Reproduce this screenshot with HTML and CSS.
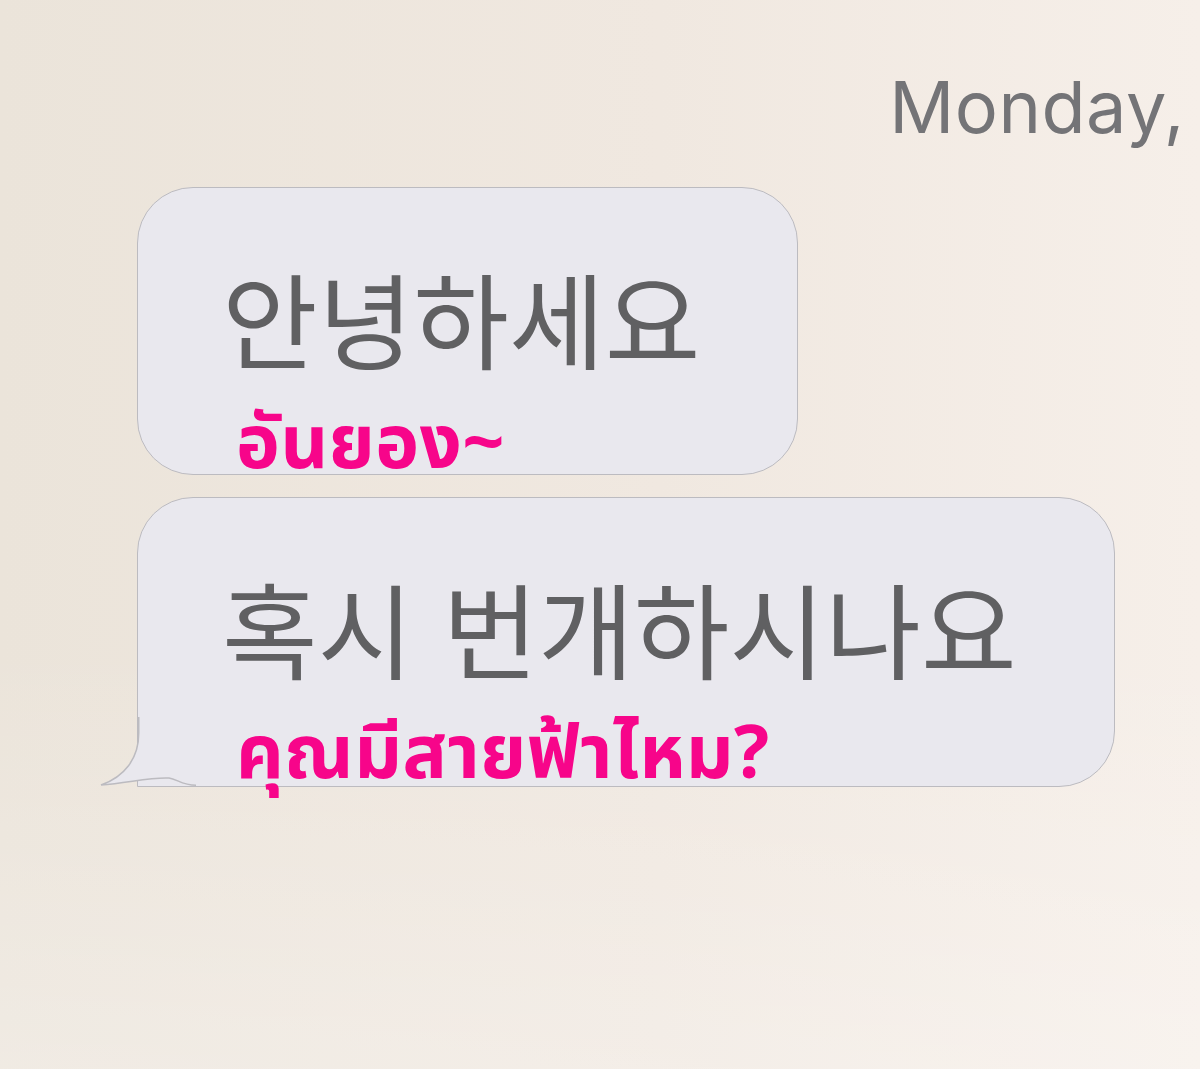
FILE: index.html
```html
<!DOCTYPE html>
<html lang="ko">
<head>
    <meta charset="UTF-8">
    <meta name="viewport" content="width=device-width, initial-scale=1.0">
    <title>Messages</title>
    <link rel="stylesheet" href="styles.css">
</head>
<body>
    <div class="screen">
        <div class="date">Monday,</div>
        <div class="thread">
            <div class="bubble">
                <div class="ko">안녕하세요</div>
                <div class="th">อันยอง~</div>
            </div>
            <div class="bubble last">
                <div class="ko">혹시 번개하시나요</div>
                <div class="th">คุณมีสายฟ้าไหม?</div>
                <svg class="tail" width="98" height="72" viewBox="0 0 98 72">
                    <path class="tail-fill" d="M40.75 0 L40.75 16 C40.75 42 26 60 3 68 C30 66 52 60 71 61 C79 62 84 68.25 98 68.25 L98 0 Z"/>
                    <path class="tail-line" d="M40.75 0 L40.75 16 C40.75 42 26 60 3 68 C30 66 52 60 71 61 C79 62 84 68.25 98 68.25"/>
                </svg>
            </div>
        </div>
    </div>
</body>
</html>
```

FILE: styles.css
```css
body {
    margin: 0;
    font-family: 'Inter', 'Liberation Sans', sans-serif;
    background: linear-gradient(90deg, #ebe4da 0%, #f0e8e0 55%, #f6efe9 100%);
    min-height: 100vh;
    overflow: hidden;
}
.screen {
    height: 1069px;
    background: linear-gradient(180deg, rgba(255,255,255,0) 60%, rgba(255,255,255,0.25) 100%);
}
.date {
    padding-top: 71px;
    padding-right: 15px;
    text-align: right;
    font-size: 72px;
    line-height: 1;
    color: #747477;
    letter-spacing: 0.5px;
}
.thread {
    margin-top: 44px;
    padding-left: 137px;
    display: flex;
    flex-direction: column;
    align-items: flex-start;
    gap: 22px;
}
.bubble {
    position: relative;
    box-sizing: border-box;
    height: 288px;
    padding: 0 97px 0 84px;
    background-color: #e9e8ee;
    border: 1.5px solid #bcbbc0;
    border-radius: 56px;
    display: flex;
    flex-direction: column;
}
.bubble.last {
    height: 290px;
    border-bottom-left-radius: 0;
}
.ko {
    margin-top: 74px;
    font-family: 'Noto Sans CJK KR', sans-serif;
    font-weight: 400;
    font-size: 104px;
    line-height: 110px;
    color: #606062;
    white-space: nowrap;
}
.th {
    margin-top: 36px;
    margin-left: 14px;
    font-family: 'Noto Sans Thai', 'Noto Sans', sans-serif;
    font-weight: bold;
    font-size: 74px;
    line-height: 74px;
    color: #f7058a;
    letter-spacing: 0.5px;
    white-space: nowrap;
}
.tail {
    position: absolute;
    left: -40px;
    bottom: -3px;
}
.tail-fill {
    fill: #e9e8ee;
}
.tail-line {
    fill: none;
    stroke: #bcbbc0;
    stroke-width: 1.5;
}
```
